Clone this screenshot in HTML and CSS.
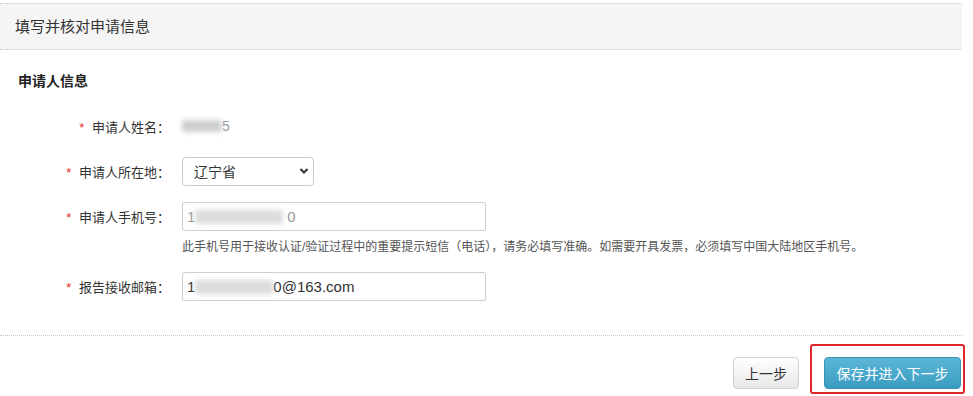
FILE: index.html
```html
<!DOCTYPE html>
<html lang="zh-CN">
<head>
<meta charset="utf-8">
<title>填写并核对申请信息</title>
<link rel="stylesheet" href="styles.css">
</head>
<body>
<div class="page">
  <div class="panel-head">填写并核对申请信息</div>
  <div class="section-title">申请人信息</div>
  <div class="form">
    <div class="row row-name">
      <div class="label"><span class="req">*</span> 申请人姓名：</div>
      <div class="field value"><span class="blur blur-name"></span><span class="faint">5</span></div>
    </div>
    <div class="row row-select">
      <div class="label"><span class="req">*</span> 申请人所在地：</div>
      <div class="field">
        <div class="select">
          <span>辽宁省</span>
          <svg class="chev" width="10" height="8" viewBox="0 0 10 8"><path d="M1.5 2 L5 5.5 L8.5 2" fill="none" stroke="#333" stroke-width="2"/></svg>
        </div>
      </div>
    </div>
    <div class="row row-input">
      <div class="label"><span class="req">*</span> 申请人手机号：</div>
      <div class="field">
        <div class="input"><span class="faint">1</span><span class="blur blur-phone"></span><span class="faint">0</span></div>
      </div>
    </div>
    <div class="hint">此手机号用于接收认证/验证过程中的重要提示短信（电话），请务必填写准确。如需要开具发票，必须填写中国大陆地区手机号。</div>
    <div class="row row-input row-email">
      <div class="label"><span class="req">*</span> 报告接收邮箱：</div>
      <div class="field">
        <div class="input"><span>1</span><span class="blur blur-mail"></span><span>0@163.com</span></div>
      </div>
    </div>
  </div>
  <div class="footer">
    <button class="btn btn-default">上一步</button>
    <div class="mark"><button class="btn btn-primary">保存并进入下一步</button></div>
  </div>
</div>
</body>
</html>
```
FILE: styles.css
```css
html, body {
  margin: 0;
  padding: 0;
  background: #fff;
}
body {
  font-family: "Liberation Sans", "Noto Sans CJK SC", sans-serif;
  color: #333;
  font-size: 14px;
}
.page {
  width: 962px;
  padding-top: 3px;
}
.panel-head {
  height: 45px;
  line-height: 45px;
  background: #f5f5f5;
  border-top: 1px dotted #c8c8c8;
  border-bottom: 1px dotted #c8c8c8;
  padding-left: 15px;
  font-size: 15px;
  color: #333;
}
.section-title {
  margin-top: 21px;
  padding-left: 18px;
  line-height: 20px;
  font-size: 14px;
  font-weight: bold;
  color: #222;
}
.form {
  margin-top: 20px;
}
.row {
  display: flex;
  align-items: center;
}
.label {
  width: 170px;
  text-align: right;
  flex: none;
  font-size: 13px;
  color: #333;
}
.req {
  color: #e0302a;
  margin-right: 4px;
}
.field {
  margin-left: 12px;
  display: flex;
  align-items: center;
}
.row-name {
  height: 30px;
}
.row-select {
  margin-top: 15px;
  height: 30px;
}
.row-input {
  margin-top: 16px;
  height: 29px;
}
.row-email {
  margin-top: 15px;
}
.value {
  height: 20px;
}
.blur {
  display: inline-block;
  background: #cfcfcf;
  filter: blur(2.5px);
  border-radius: 2px;
}
.blur-name {
  width: 40px;
  height: 12px;
}
.faint {
  color: #999;
}
.select {
  box-sizing: border-box;
  width: 132px;
  height: 29px;
  border: 1px solid #c9c9c9;
  border-radius: 4px;
  display: flex;
  align-items: center;
  justify-content: space-between;
  padding: 0 4px 0 11px;
  font-size: 14px;
  color: #333;
}
.input {
  box-sizing: border-box;
  width: 304px;
  height: 29px;
  border: 1px solid #cfcfcf;
  border-radius: 2px;
  display: flex;
  align-items: center;
  padding-left: 4px;
  font-size: 15px;
  color: #333;
}
.blur-phone {
  width: 88px;
  height: 14px;
  background: #dcdcdc;
  margin-right: 4px;
}
.blur-mail {
  width: 78px;
  height: 14px;
  background: #dcdcdc;
}
.hint {
  margin-left: 182px;
  margin-top: 6px;
  line-height: 20px;
  font-size: 12px;
  color: #555;
}
.footer {
  margin-top: 34px;
  border-top: 1px dotted #c8c8c8;
  padding-top: 8px;
  display: flex;
  justify-content: flex-end;
  align-items: flex-start;
}
.btn {
  height: 32px;
  border-radius: 4px;
  font-family: "Liberation Sans", "Noto Sans CJK SC", sans-serif;
  font-size: 14px;
  padding: 0;
  cursor: pointer;
  display: block;
}
.btn-default {
  width: 66px;
  margin-top: 13px;
  margin-right: 11px;
  color: #333;
  border: 1px solid #d2d2d2;
  background: linear-gradient(#ffffff, #e8e8e8);
}
.btn-primary {
  width: 137px;
  color: #fff;
  border: 1px solid #3a93b3;
  background: linear-gradient(#5bb7d8, #3a9cc0);
}
.mark {
  border: 2px solid #e0262a;
  border-radius: 3px;
  padding: 11px 2px 3px 12px;
  margin-right: -3px;
}
```
